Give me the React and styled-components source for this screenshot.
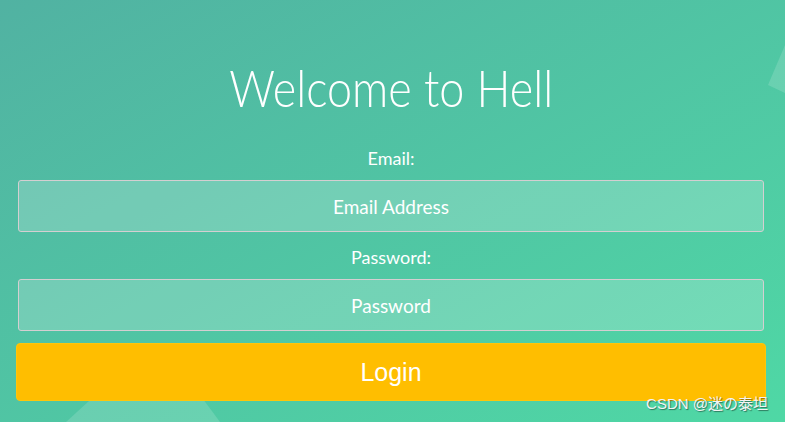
import React from 'react';
import styled, { createGlobalStyle } from 'styled-components';

const GlobalStyle = createGlobalStyle`
  html, body {
    margin: 0;
    padding: 0;
  }
  body {
    font-family: Lato, "Open Sans", sans-serif;
  }
`;

const Page = styled.div`
  position: relative;
  height: 422px;
  overflow: hidden;
  background: linear-gradient(to bottom right, #51b2a2 0%, #4fd8a5 100%);
`;

// decorative translucent shapes floating behind the form
const Bubble = styled.div`
  position: absolute;
  background: rgba(255, 255, 255, 0.15);
`;

const BubbleBottom = styled(Bubble)`
  left: 0;
  top: 380px;
  width: 260px;
  height: 42px;
  clip-path: polygon(112px 0, 189px 0, 220px 42px, 66px 42px);
`;

const BubbleRight = styled(Bubble)`
  right: 0;
  top: 45px;
  width: 17px;
  height: 48px;
  clip-path: polygon(17px 0, 0 40px, 17px 48px);
`;

const Form = styled.form`
  position: relative;
  z-index: 1;
  display: flex;
  flex-direction: column;
  align-items: center;
  padding: 56px 19px 0 16px;
`;

// source font was a narrow light sans; squeeze Lato Light to the same width
const Title = styled.h1`
  margin: 0;
  font-size: 52px;
  font-weight: 300;
  line-height: 62px;
  color: #fff;
  transform: scaleX(0.865);
`;

const Label = styled.label`
  margin-top: ${(p) => p.$top}px;
  font-size: 18px;
  line-height: 24px;
  color: #fff;
`;

const Input = styled.input`
  box-sizing: border-box;
  width: calc(100% - 4px);
  height: 52px;
  margin-top: 10px;
  border: 1px solid #d4cfd1;
  border-radius: 3px;
  background: rgba(255, 255, 255, 0.2);
  font-family: Lato, "Open Sans", sans-serif;
  font-size: 19px;
  color: #fff;
  text-align: center;
  outline: none;

  &::placeholder {
    color: #fff;
  }
`;

const Button = styled.button`
  box-sizing: border-box;
  width: 100%;
  height: 58px;
  margin-top: 12px;
  border: 1px solid #ffc60a;
  border-radius: 4px;
  background: #ffbe00;
  font-family: "Liberation Sans", Arial, sans-serif;
  font-size: 25px;
  color: #fff;
  cursor: pointer;
`;

const Watermark = styled.div`
  position: absolute;
  right: 17px;
  bottom: 9px;
  z-index: 2;
  font-family: "Liberation Sans", "Noto Sans CJK SC", sans-serif;
  font-size: 15px;
  color: #f4f4f4;
  text-shadow: 1px 1px 1px rgba(0, 0, 0, 0.45);
`;

const App = () => {
  return (
    <>
      <GlobalStyle />
      <Page>
        <BubbleBottom />
        <BubbleRight />
        <Form onSubmit={(e) => e.preventDefault()}>
          <Title>Welcome to Hell</Title>
          <Label $top={28}>Email:</Label>
          <Input type="email" placeholder="Email Address" />
          <Label $top={13}>Password:</Label>
          <Input type="password" placeholder="Password" />
          <Button type="submit">Login</Button>
        </Form>
        <Watermark>CSDN @迷の泰坦</Watermark>
      </Page>
    </>
  );
};

export default App;
